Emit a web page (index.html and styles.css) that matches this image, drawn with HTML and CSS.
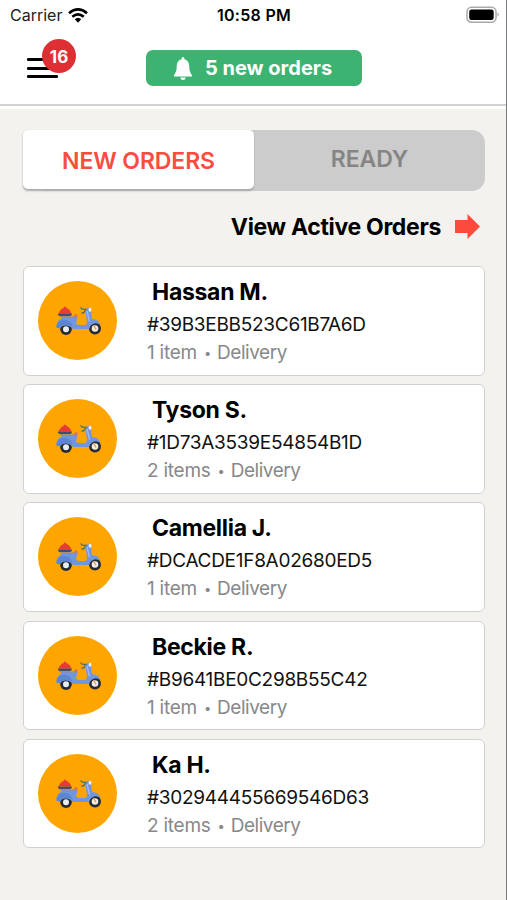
FILE: index.html
```html
<!DOCTYPE html>
<html lang="en">
<head>
<meta charset="utf-8">
<title>Orders</title>
<link rel="stylesheet" href="styles.css">
</head>
<body>
<svg class="sprite" aria-hidden="true">
  <symbol id="scooter" viewBox="3.5 5 46 32">
    <path d="M6.300 13.500Q7 9.500 11 8Q11.500 6.500 12.500 6.500T14 8Q18 9.500 18.700 13.500Z" fill="#e83b36"/>
    <path d="M5.500 13.500H19.300V15L17.500 16.200H7.300L5.500 15Z" fill="#464b70"/>
    <path d="M19.500 18L23.500 14L25 15L24 18.500Z" fill="#da6b58"/>
    <circle cx="13.500" cy="29.200" r="5.800" fill="#252b36"/>
    <circle cx="13.500" cy="29.200" r="3" fill="#e7edf0"/>
    <circle cx="42.500" cy="28.500" r="6" fill="#252b36"/>
    <circle cx="42.500" cy="28.500" r="3.300" fill="#f4ede5"/>
    <path d="M41 25L43.500 29.500" stroke="#db9f68" stroke-width="1.500"/>
    <path d="M9 17H25L23.500 23.500Q25 25 28 25H32Q34.500 25 34.500 21L32.500 9.500L36 7.500L38 9.500L39.500 19Q46 19 48 25Q43 21.500 39 25Q37.500 26 36.500 29H20.500Q18.500 26 14 25.500Q9.500 25 7.500 28.500L4 27.500Q3.500 21 9 18.500Z" fill="#7096df"/>
    <path d="M8.500 16.500H25L24.500 18H8Z" fill="#858fbc"/>
    <path d="M9 20Q18 18.500 20 27Q15.500 23.500 10 25.500L7.500 28.500L4 27.500Q4 22 9 20Z" fill="#5c86d2"/>
    <path d="M34.500 11L37 21.500" stroke="#a2bced" stroke-width="1.300"/>
    <path d="M28 7.500Q29 9.500 32 9.500H34M29 13Q32 13.500 32.500 10.500" fill="none" stroke="#527254" stroke-width="1.400"/>
    <ellipse cx="37.500" cy="9.700" rx="1.500" ry="2" fill="#e7f3e6"/>
  </symbol>
</svg>
<div class="screen">
  <header class="header">
    <div class="status">
      <div class="carrier"><span class="carrier-name">Carrier</span>
        <svg class="wifi" viewBox="0 0 20 15"><g fill="none" stroke="#000" stroke-width="2.600"><path d="M1 5.200Q10-2.500 19 5.200"/><path d="M4.300 8.800Q10 3.800 15.700 8.800"/></g><path d="M6.800 11.300Q10 8.300 13.200 11.300L10 14.700Z"/></svg>
      </div>
      <span class="clock">10:58 PM</span>
      <svg class="battery" viewBox="0 0 34 18"><rect x="1" y="1.200" width="29" height="15" rx="4.500" fill="#fff" stroke="#aaa" stroke-width="1.500"/><rect x="3.200" y="3.500" width="24.500" height="10.500" rx="2.300"/><path d="M31.500 6.500Q34 8.500 31.500 10.500Z" fill="#999"/></svg>
    </div>
    <div class="nav">
      <div class="menu"><i></i><i></i><i></i><span class="badge">16</span></div>
      <div class="notice">
        <svg class="bell" viewBox="0 0 18 23"><path d="M9 0Q10.500 0 10.500 2.200C14 3.300 15.300 6 15.300 10C15.300 15 17.500 17 18 18.500V19.500H0V18.500C.5 17 2.700 15 2.700 10C2.700 6 4 3.300 7.500 2.200Q7.500 0 9 0ZM6.200 20.500H11.800Q11.300 23 9 23T6.200 20.500Z" fill="#fff"/></svg>
        <span>5 new orders</span>
      </div>
    </div>
  </header>
  <main>
    <div class="tabs"><div class="tab active"><span>NEW ORDERS</span></div><div class="tab ready"><span>READY</span></div></div>
    <div class="view"><span>View Active Orders</span><svg class="arrow" viewBox="0 0 25 25"><path d="M0 6H12.500V0L25 12.500L12.500 25V19H0Z" fill="#fc4b3c"/></svg></div>
    <div class="list">
      <article class="card"><div class="avatar"><svg><use href="#scooter"/></svg></div><div class="info"><h2>Hassan M.</h2><p class="code">#39B3EBB523C61B7A6D</p><p class="meta">1 item <b>•</b> <span>Delivery</span></p></div></article>
      <article class="card"><div class="avatar"><svg><use href="#scooter"/></svg></div><div class="info"><h2>Tyson S.</h2><p class="code">#1D73A3539E54854B1D</p><p class="meta">2 items <b>•</b> <span>Delivery</span></p></div></article>
      <article class="card"><div class="avatar"><svg><use href="#scooter"/></svg></div><div class="info"><h2>Camellia J.</h2><p class="code">#DCACDE1F8A02680ED5</p><p class="meta">1 item <b>•</b> <span>Delivery</span></p></div></article>
      <article class="card"><div class="avatar"><svg><use href="#scooter"/></svg></div><div class="info"><h2>Beckie R.</h2><p class="code">#B9641BE0C298B55C42</p><p class="meta">1 item <b>•</b> <span>Delivery</span></p></div></article>
      <article class="card"><div class="avatar"><svg><use href="#scooter"/></svg></div><div class="info"><h2>Ka H.</h2><p class="code">#302944455669546D63</p><p class="meta">2 items <b>•</b> <span>Delivery</span></p></div></article>
    </div>
  </main>
</div>
</body>
</html>
```
FILE: styles.css
```css
* { box-sizing: border-box; }
body { margin: 0; font-family: Inter, "Liberation Sans", sans-serif; color: #000; }
.sprite { display: none; }
.screen { width: 507px; height: 900px; overflow: hidden; background: #f3f2ee; border-right: 1px solid #77797b; }
.header { height: 109px; background: #fff; }
.status { height: 30px; display: grid; grid-template-columns: 1fr auto 1fr; align-items: center; padding: 0 6px 0 10px; }
.carrier { display: flex; align-items: center; gap: 6px; font-size: 16px; color: #222; }
.wifi { width: 20px; height: 15px; }
.clock { font-size: 16px; font-weight: 600; letter-spacing: .3px; position: relative; left: -1px; }
.battery { width: 34px; height: 18px; justify-self: end; margin-top: -1px; }
.nav { height: 75.500px; display: flex; border-bottom: 2px solid #d2d2d2; padding: 20px 0 0 27px; }
.menu { position: relative; width: 31px; height: 22px; margin: 8px 88px 0 0; display: flex; flex-direction: column; gap: 5.500px; }
.menu i { height: 3px; background: #000; border-radius: 1px; }
.badge { position: absolute; left: 15px; top: -19px; width: 34px; height: 34px; border-radius: 50%; background: #de3034; color: #fff; display: flex; align-items: center; justify-content: center; font-size: 17px; font-weight: 700; padding-top: 1px; }
.notice { width: 216px; height: 36px; border-radius: 7px; background: #3cb371; color: #fff; display: flex; align-items: center; padding-left: 28px; gap: 13px; font-size: 20px; font-weight: 700; white-space: nowrap; }
.bell { width: 18px; height: 23px; }
main { padding: 21px 21px 0 23px; }
.tabs { width: 462px; height: 61px; display: flex; background: linear-gradient(90deg, transparent 0 20px, #ccc 20px); border-radius: 13px; font-size: 23px; font-weight: 600; }
.tab { width: 231px; display: flex; align-items: center; justify-content: center; letter-spacing: -.1px; }
.active { height: 59px; background: #fff; color: #fb4c40; border-radius: 5px; box-shadow: 0 1.500px 2px #aaa; padding-top: 2px; }
.ready { height: 58px; color: #858585; }
.view { height: 75px; display: flex; justify-content: flex-end; align-items: flex-start; gap: 14px; padding: 23px 5px 0 0; font-size: 23px; line-height: 27px; font-weight: 700; letter-spacing: -.33px; }
.arrow { width: 25px; height: 25px; }
.list { width: 462px; display: flex; flex-direction: column; gap: 8.700px; }
.card { height: 109.500px; display: flex; background: #fff; border: 1.500px solid #d1d1d1; border-radius: 6px; padding: 14px; }
.avatar { width: 79px; height: 79px; border-radius: 50%; background: #ffa500; display: flex; align-items: center; justify-content: center; padding: 1px 0 0 2px; }
.avatar svg { width: 46px; height: 32px; }
.info { margin-left: 30px; white-space: nowrap; }
h2 { font-size: 23px; line-height: 28px; margin: -3px 0 0 5px; font-weight: 700; letter-spacing: -.3px; }
p { margin: 0; }
.code { font-size: 19px; line-height: 25px; margin-top: 6px; color: #111; letter-spacing: -.28px; }
.meta { display: flex; align-items: center; font-size: 19px; line-height: 25px; margin-top: 2px; color: #888; letter-spacing: -.25px; }
.meta b { font-size: 13px; font-weight: 400; margin: 2px 6px 0 7px; }
.meta span { letter-spacing: -.45px; }
```
